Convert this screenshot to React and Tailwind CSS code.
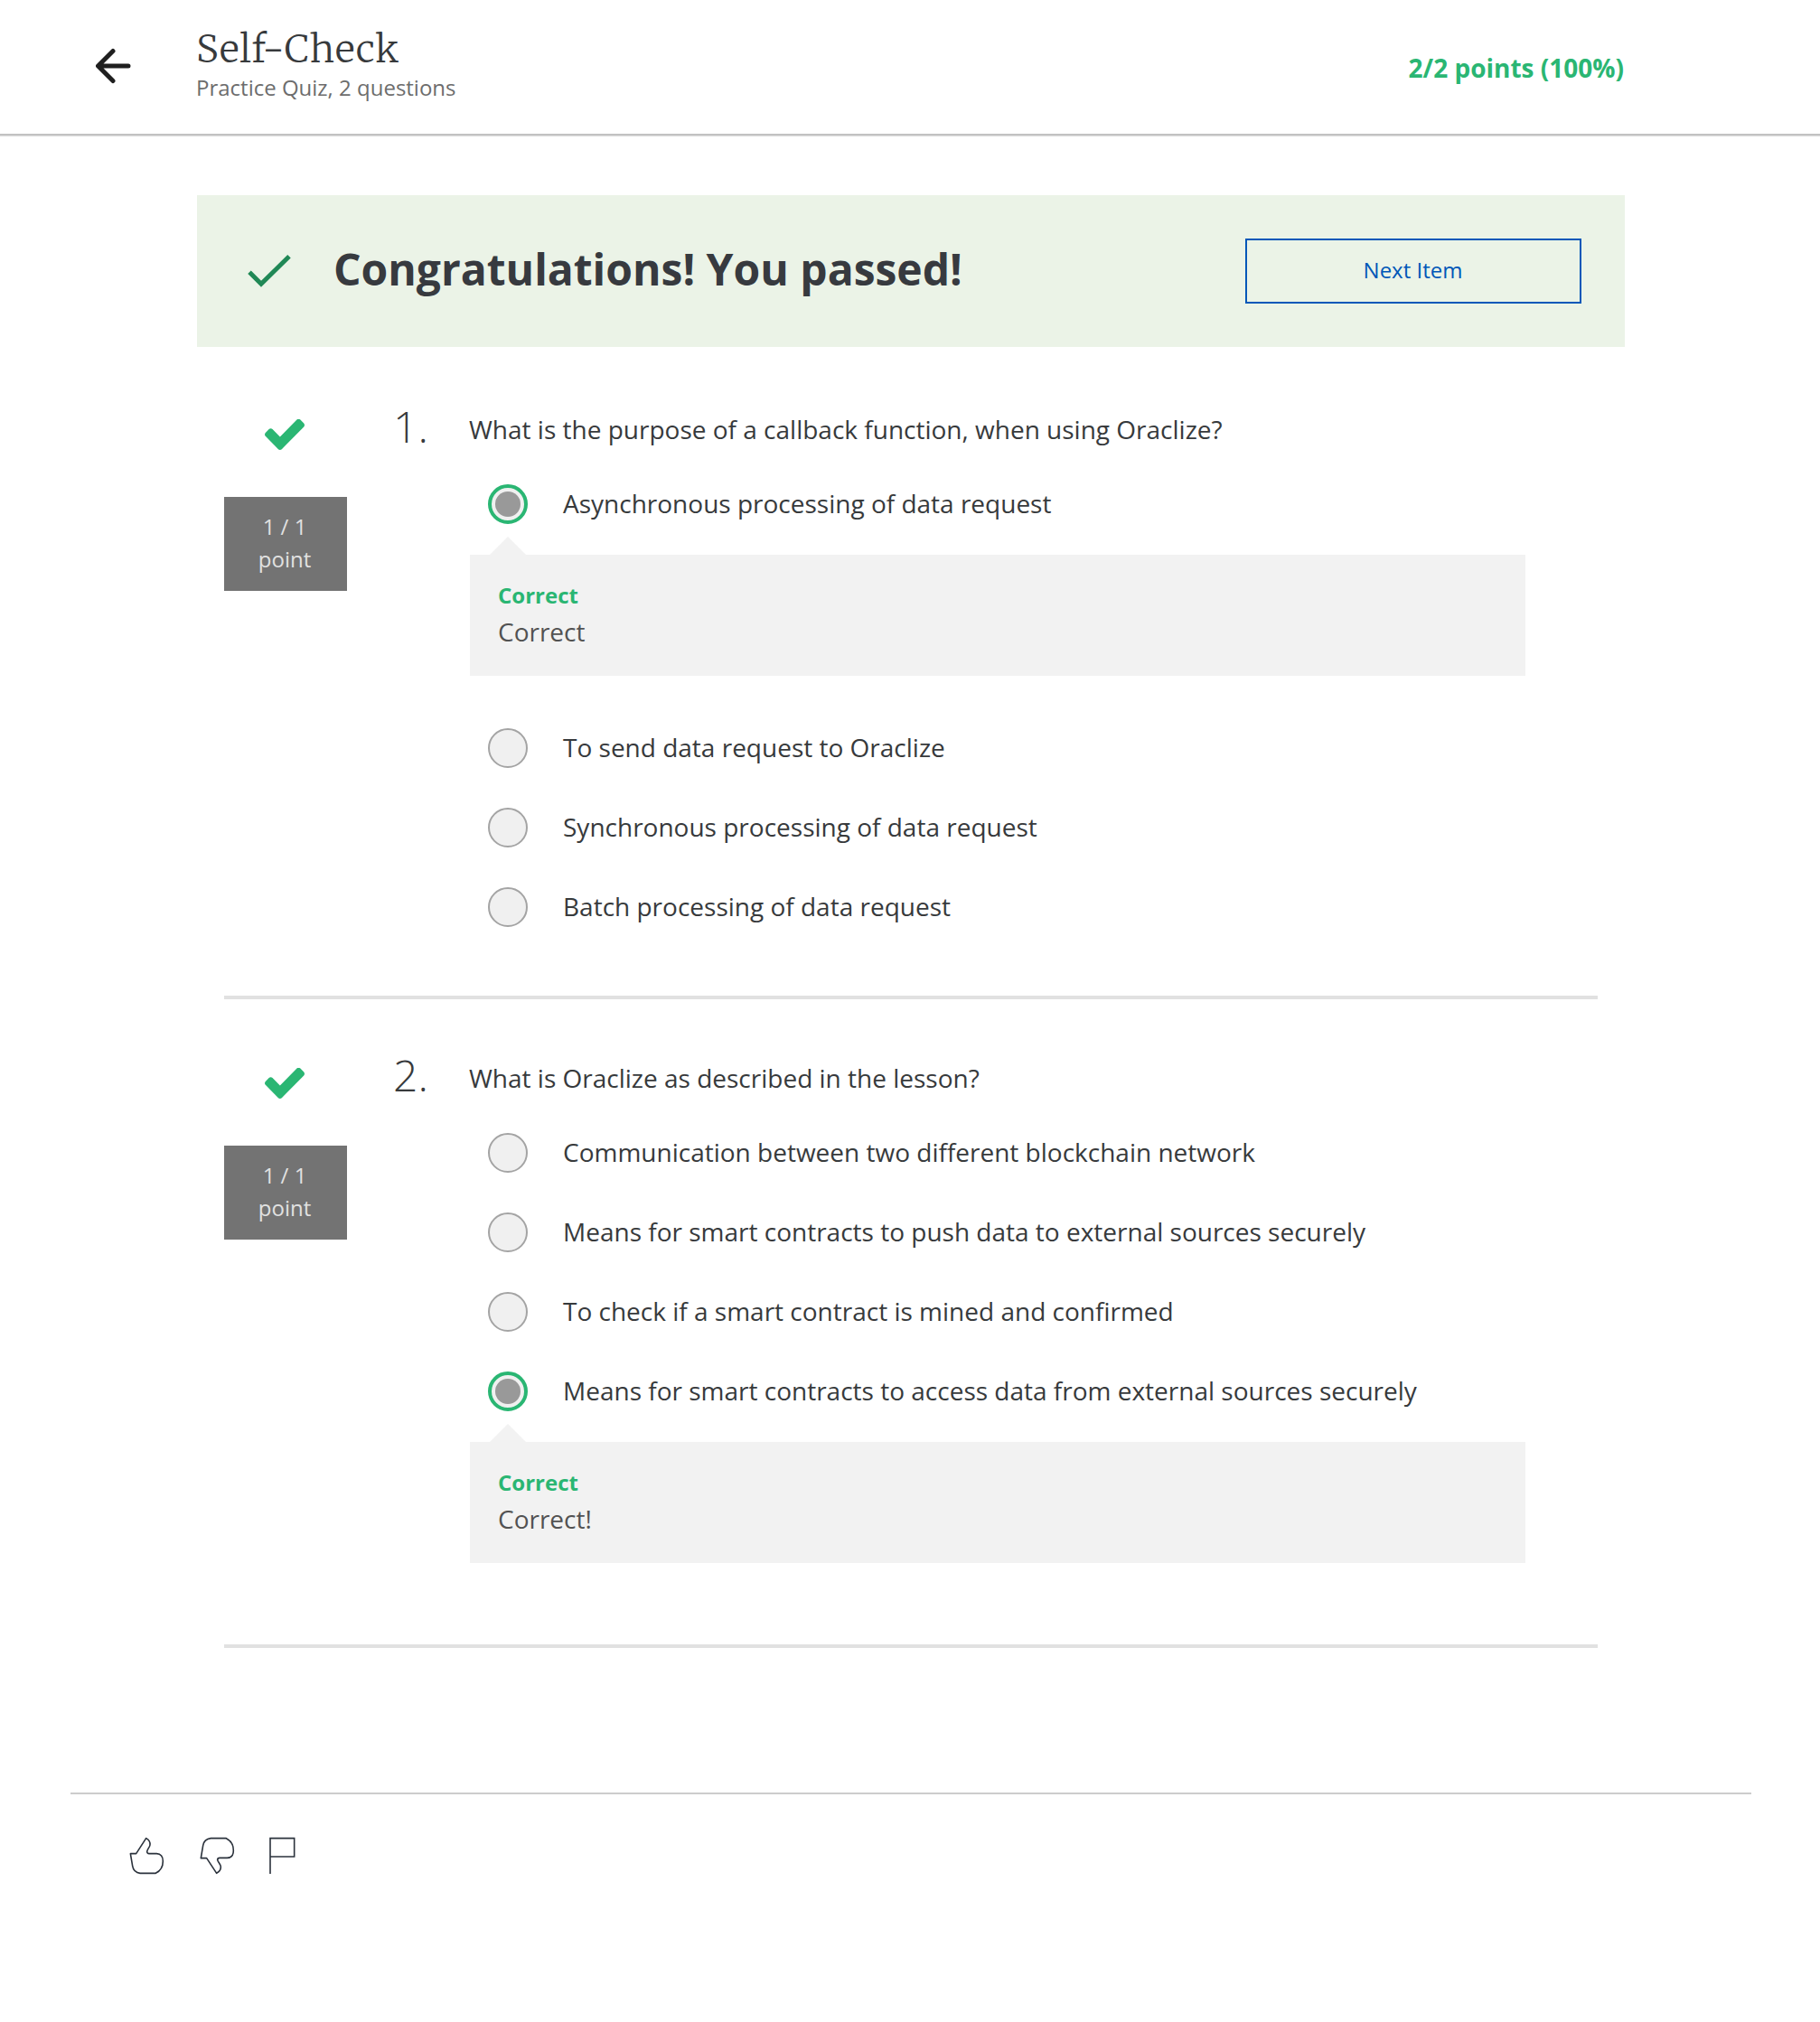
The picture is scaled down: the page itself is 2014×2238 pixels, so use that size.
const QUESTIONS = [
  {
    number: 1,
    prompt: "What is the purpose of a callback function, when using Oraclize?",
    options: [
      { label: "Asynchronous processing of data request", selected: true, feedback: "Correct" },
      { label: "To send data request to Oraclize" },
      { label: "Synchronous processing of data request" },
      { label: "Batch processing of data request" },
    ],
  },
  {
    number: 2,
    prompt: "What is Oraclize as described in the lesson?",
    options: [
      { label: "Communication between two different blockchain network" },
      { label: "Means for smart contracts to push data to external sources securely" },
      { label: "To check if a smart contract is mined and confirmed" },
      {
        label: "Means for smart contracts to access data from external sources securely",
        selected: true,
        feedback: "Correct!",
      },
    ],
  },
];

function ArrowLeft() {
  return (
    <svg className="block h-10 w-10" viewBox="0 0 40 40" fill="none" stroke="#1f1f1f" strokeWidth="5" strokeLinecap="round" strokeLinejoin="round">
      <path d="M36 20H3.5M19 3.500 2.500 20l16.500 16.500" />
    </svg>
  );
}

function ThinCheck() {
  return (
    <svg className="block h-[38px] w-[50px]" viewBox="0 0 50 38" fill="none" stroke="#208856" strokeWidth="5">
      <path d="M3 20.200 16 33.200 47 2.800" />
    </svg>
  );
}

function BoldCheck() {
  return (
    <svg className="block h-[34px] w-[44px]" viewBox="121 342 1550 1180" preserveAspectRatio="none" fill="#2ab673">
      <path d="M1671 566q0 40-28 68l-724 724-136 136q-28 28-68 28t-68-28l-136-136-362-362q-28-28-28-68t28-68l136-136q28-28 68-28t68 28l294 295 656-657q28-28 68-28t68 28l136 136q28 28 28 68z" />
    </svg>
  );
}

function Header() {
  return (
    <header className="flex h-[150px] items-start border-b-2 border-[#c2c2c2] shadow-[0_1px_1px_rgba(0,0,0,0.12)]">
      <button className="mt-[53px] ml-[106px] w-10" aria-label="Back">
        <ArrowLeft />
      </button>
      <div className="ml-[71px] flex-1 pt-[27px]">
        <h1 className="h-[53px] font-['Merriweather','DejaVu_Serif',serif] text-[42px] leading-[54px] font-light tracking-[0.8px] text-[#373a3c]">
          Self-Check
        </h1>
        <p className="text-2xl leading-[33px] text-[#6d6d6d]">Practice Quiz, 2 questions</p>
      </div>
      <p className="mt-[54px] mr-[217px] text-[28px] leading-[42px] font-bold text-[#2ab673]">2/2 points (100%)</p>
    </header>
  );
}

function Banner() {
  return (
    <section className="mt-[66px] ml-[218px] flex h-[168px] w-[1580px] items-start bg-[#ebf3e7]">
      <div className="mt-[65px] ml-[55px]">
        <ThinCheck />
      </div>
      <h2 className="mt-[49px] ml-[46px] flex-1 text-5xl leading-[65px] font-bold text-[#373a3f]">
        Congratulations! You passed!
      </h2>
      <button className="mt-12 mr-12 h-[72px] w-[372px] border-2 border-[#0057b8] pr-px pb-[3px] text-2xl leading-[33px] text-[#0057b8]">
        Next Item
      </button>
    </section>
  );
}

function Radio({ selected }) {
  return selected ? (
    <span className="flex size-11 items-center justify-center rounded-full border-4 border-[#2ab673] bg-[#f0f0f0]">
      <span className="size-7 rounded-full bg-[#999]" />
    </span>
  ) : (
    <span className="block size-11 rounded-full border-2 border-[#a4a4a4] bg-[#f0f0f0]" />
  );
}

function Feedback({ text }) {
  return (
    <div className="mt-3.5 mb-[58px]">
      <svg className="ml-[22px] block h-5 w-10" viewBox="0 0 40 20" fill="#f2f2f2">
        <path d="M0 20 20 0 40 20z" />
      </svg>
      <div className="h-[134px] w-[1168px] bg-[#f2f2f2] pt-[28px] pl-[31px]">
        <p className="text-2xl leading-[33px] font-bold text-[#2ab673]">Correct</p>
        <p className="mt-[3px] text-[28px] leading-[42px] text-[#525252]">{text}</p>
      </div>
    </div>
  );
}

function Option({ option }) {
  return (
    <li>
      <label className="ml-5 flex h-11 items-start gap-[39px]">
        <Radio selected={option.selected} />
        <span className="text-[28px] leading-[42px] whitespace-nowrap text-[#373a3c]">{option.label}</span>
      </label>
      {option.feedback ? <Feedback text={option.feedback} /> : <div className="h-11" />}
    </li>
  );
}

function Question({ question }) {
  return (
    <section className="ml-[248px] flex h-[718px] w-[1520px] items-start border-b-4 border-[#e1e1e1]">
      <div className="w-[136px] pt-[76px]">
        <div className="ml-[45px]">
          <BoldCheck />
        </div>
        <div className="mt-[52px] h-[104px] bg-[#737373] pt-[15px] pr-0.5 text-center text-2xl leading-9 text-[#e1e1e1]">
          1 / 1
          <br />
          point
        </div>
      </div>
      <div className="mt-[51px] ml-[51px] w-[85px] text-5xl leading-[65px] font-light text-[#373a3c]">
        {question.number}.
      </div>
      <div className="pt-[66px]">
        <h3 className="-ml-px text-[28px] leading-[42px] text-[#373a3c]">{question.prompt}</h3>
        <ul className="mt-10">
          {question.options.map((option) => (
            <Option key={option.label} option={option} />
          ))}
        </ul>
      </div>
    </section>
  );
}

function Footer() {
  return (
    <footer className="mt-[160px] ml-[78px] flex w-[1860px] items-start border-t-2 border-[#ccc] pt-[46px] pl-16">
      <button aria-label="Like">
        <svg className="block h-11 w-[42px]" viewBox="66 216 126 132" fill="none" stroke="#2b323c" strokeWidth="4.8" strokeLinejoin="round">
          <path d="M73 275H92L125 224C134 229 139 237 138 246C137 254 129 260 128 268Q128 275 135 275H160C174 275 181 286 181 300C181 319 173 332 157 340H105C90 338 82 328 80 316Z" />
        </svg>
      </button>
      <button className="ml-9" aria-label="Dislike">
        <svg className="block h-11 w-[42px]" viewBox="300 216 126 132" fill="none" stroke="#2b323c" strokeWidth="4.8" strokeLinejoin="round">
          <path d="M307 290H326L359 340C369 335 373 327 373 319C372 309 364 304 362 296Q362 289 369 289H394C408 289 415 279 415 265C415 246 407 232 391 224H340C325 226 316 235 314 248Z" />
        </svg>
      </button>
      <button className="ml-8" aria-label="Flag">
        <svg className="block h-11 w-[38px]" viewBox="522 216 114 132" fill="none" stroke="#2b323c" strokeWidth="4.8">
          <path d="M537 342V224H617V285H537" />
        </svg>
      </button>
    </footer>
  );
}

export default function App() {
  return (
    <div className="h-[2238px] w-[2014px] overflow-hidden bg-white font-['Open_Sans',sans-serif]">
      <Header />
      <Banner />
      <main className="mt-1">
        {QUESTIONS.map((question) => (
          <Question key={question.number} question={question} />
        ))}
      </main>
      <Footer />
    </div>
  );
}
